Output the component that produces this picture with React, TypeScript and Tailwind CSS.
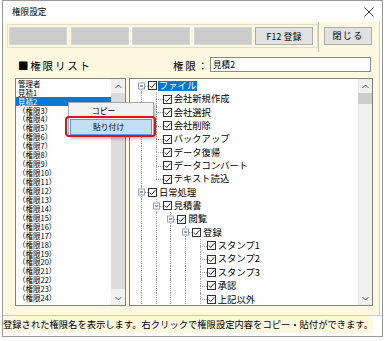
import React from 'react';

const jp = "font-['Noto_Sans_CJK_JP','Noto_Sans',sans-serif]";

type Row = {
  label: string;
  level: number;
  exp?: boolean;
  guides: number[];
  top: boolean;
  bottom: boolean;
  selected?: boolean;
};

const fileItems = ['会社新規作成', '会社選択', '会社削除', 'バックアップ', 'データ復帰', 'データコンバート', 'テキスト読込'];
const stampItems = ['スタンプ1', 'スタンプ2', 'スタンプ3', '承認', '上記以外'];

const treeRows: Row[] = [
  { label: 'ファイル', level: 0, exp: true, guides: [], top: false, bottom: true, selected: true },
  ...fileItems.map((label, i) => ({ label, level: 1, guides: [0], top: true, bottom: i < fileItems.length - 1 })),
  { label: '日常処理', level: 0, exp: true, guides: [], top: true, bottom: true },
  { label: '見積書', level: 1, exp: true, guides: [0], top: true, bottom: true },
  { label: '閲覧', level: 2, exp: true, guides: [0, 1], top: true, bottom: true },
  { label: '登録', level: 3, exp: true, guides: [0, 1, 2], top: true, bottom: true },
  ...stampItems.map((label) => ({ label, level: 4, guides: [0, 1, 2, 3], top: true, bottom: true })),
];

const listItems = ['管理者', '見積1', '見積2', ...Array.from({ length: 22 }, (_, i) => `（権限${i + 3}）`)];

const X0 = 11;
const IND = 14.7;

function CheckBox() {
  return (
    <svg width="9" height="9" viewBox="0 0 9 9" className="shrink-0">
      <rect x="0.5" y="0.5" width="8" height="8" fill="white" stroke="#333" />
      <path d="M1.8 4.6 L3.7 6.5 L7.3 2.3" fill="none" stroke="#222" strokeWidth="1" />
    </svg>
  );
}

function TreeRow({ r }: { r: Row }) {
  const slot = X0 + r.level * IND;
  return (
    <div className="relative flex h-[13.35px] items-center" style={{ paddingLeft: slot + 7 }}>
      {r.guides.map((l) => (
        <span key={l} className="absolute top-0 bottom-0 border-l border-dotted border-[#a0a0a0]" style={{ left: X0 + l * IND }} />
      ))}
      {r.top && <span className="absolute top-0 h-1/2 border-l border-dotted border-[#a0a0a0]" style={{ left: slot }} />}
      {r.bottom && <span className="absolute top-1/2 bottom-0 border-l border-dotted border-[#a0a0a0]" style={{ left: slot }} />}
      <span className="absolute top-1/2 w-[7px] border-t border-dotted border-[#a0a0a0]" style={{ left: slot }} />
      {r.exp && (
        <span
          className="absolute top-1/2 flex h-[7px] w-[7px] -translate-y-1/2 items-center justify-center border border-[#91a3bd] bg-white"
          style={{ left: slot - 3 }}
        >
          <span className="h-px w-[3px] bg-[#23448a]" />
        </span>
      )}
      <CheckBox />
      <span
        className={`ml-px flex h-[10px] items-center px-px text-[9.3px] leading-none whitespace-nowrap ${
          r.selected ? 'bg-[#0078d7] text-white' : 'text-black'
        }`}
      >
        {r.label}
      </span>
    </div>
  );
}

function Arrow({ up }: { up?: boolean }) {
  return (
    <div className="flex h-[14px] items-center justify-center">
      <svg width="7" height="5" viewBox="0 0 7 5">
        <path d={up ? 'M0.5 4 L3.5 1 L6.5 4' : 'M0.5 1 L3.5 4 L6.5 1'} fill="none" stroke="#606060" strokeWidth="1" />
      </svg>
    </div>
  );
}

export default function App() {
  return (
    <div className={`h-[341px] w-[386px] overflow-hidden bg-white ${jp}`}>
      <div className="ml-[2px] flex h-[337px] w-[381px] flex-col border border-[#9a9a9a] bg-white">
        {/* Title bar */}
        <div className="flex h-[21px] items-center justify-between pl-[9px] pr-[8px]">
          <span className="text-[8.6px] text-black">権限設定</span>
          <svg width="10" height="10" viewBox="0 0 10 10">
            <path d="M0.5 0.5 L9.5 9.5 M9.5 0.5 L0.5 9.5" stroke="#333" strokeWidth="1" />
          </svg>
        </div>

        <div className="w-[377px] border-r border-[#cfcfcf] bg-[#fff8e1]">
          {/* Toolbar */}
          <div className="flex h-[30px] items-start">
            <div className="ml-[4px] mt-[2px] flex h-[24px] w-[311px] items-center gap-[3.5px] border border-[#e3dcc8] pl-px">
              <div className="h-[18px] w-[58px] border border-[#d6d6d6] bg-[#cccccc]" />
              <div className="h-[18px] w-[58px] border border-[#d6d6d6] bg-[#cccccc]" />
              <div className="h-[18px] w-[58px] border border-[#d6d6d6] bg-[#cccccc]" />
              <div className="h-[18px] w-[58px] border border-[#d6d6d6] bg-[#cccccc]" />
              <div className="flex h-[18px] w-[58px] items-center justify-center border border-[#adadad] bg-[#e1e1e1] text-[8.6px] tracking-[0.3px] text-black">
                F12 登録
              </div>
            </div>
            <div className="h-full w-px bg-[#cbc4b0]" />
            <div className="ml-[5px] mt-[5px] flex h-[18px] w-[48px] items-center justify-center border border-[#adadad] bg-[#e1e1e1] text-[9px] tracking-[1.4px] text-black">
              閉じる
            </div>
          </div>

          {/* Main */}
          <div className="h-[263px]">
            <div className="flex h-[20px] items-center pl-[15px] pt-[5px]">
              <span className="w-[155px] pt-[4px] text-[10.5px] leading-none tracking-[1.8px] text-black">■権限リスト</span>
              <span className="w-[37px] pt-[4px] text-[10.5px] leading-none tracking-[1.8px] text-black">権限：</span>
              <div className="flex h-[15px] w-[161px] items-center border border-[#8a8a8a] bg-white pl-[2px] text-[8.6px] text-black">
                見積2
              </div>
            </div>

            <div className="mt-[6px] flex pl-[12px]">
              {/* List */}
              <div className="flex h-[228px] w-[111px] border border-[#828282] bg-white">
                <div className="flex-1 overflow-hidden">
                  {listItems.map((t) => (
                    <div
                      key={t}
                      className={`flex h-[8.94px] items-center pl-[2px] text-[7.5px] leading-none whitespace-nowrap ${
                        t === '見積2' ? 'bg-[#0078d7] text-white' : 'text-black'
                      }`}
                    >
                      {t}
                    </div>
                  ))}
                </div>
                <div className="flex w-[14px] flex-col bg-[#f0f0f0]">
                  <Arrow up />
                  <div className="h-[196px] bg-[#dcdcdc]" />
                  <div className="flex-1" />
                  <Arrow />
                </div>
              </div>

              {/* Tree */}
              <div className="ml-[3px] flex h-[228px] w-[244px] border border-[#828282] bg-white">
                <div className="flex-1 overflow-hidden">
                  {treeRows.map((r) => (
                    <TreeRow key={r.label} r={r} />
                  ))}
                </div>
                <div className="flex w-[14px] flex-col bg-[#f0f0f0]">
                  <Arrow up />
                  <div className="h-[11px] bg-[#cdcdcd]" />
                  <div className="flex-1" />
                  <Arrow />
                </div>
              </div>
            </div>
          </div>
        </div>

        {/* Status bar */}
        <div className="flex h-[18px] border-t border-[#c8c8c8] bg-white">
          <span className="flex h-[17px] items-center bg-[#fff8e1] text-[9.3px] leading-none whitespace-nowrap text-black">
            登録された権限名を表示します。右クリックで権限設定内容をコピー・貼付ができます。
          </span>
        </div>
      </div>

      {/* Context menu */}
      <div className="absolute left-[68px] top-[102px] h-[35px] w-[86px] border border-[#a8a8a8] bg-[#f2f2f2] shadow-[2px_2px_3px_rgba(0,0,0,0.25)]">
        <div className="flex h-[16px] items-center pl-[23px] text-[7.8px] text-black">コピー</div>
        <div className="mx-px flex h-[16px] items-center border border-[#5a9ee6] bg-[#c6def5] pl-[22px] text-[7.8px] text-black">
          貼り付け
        </div>
      </div>
      <div className="absolute left-[65px] top-[116px] h-[21px] w-[91px] rounded-[4px] border-2 border-[#e3101e]" />
    </div>
  );
}
